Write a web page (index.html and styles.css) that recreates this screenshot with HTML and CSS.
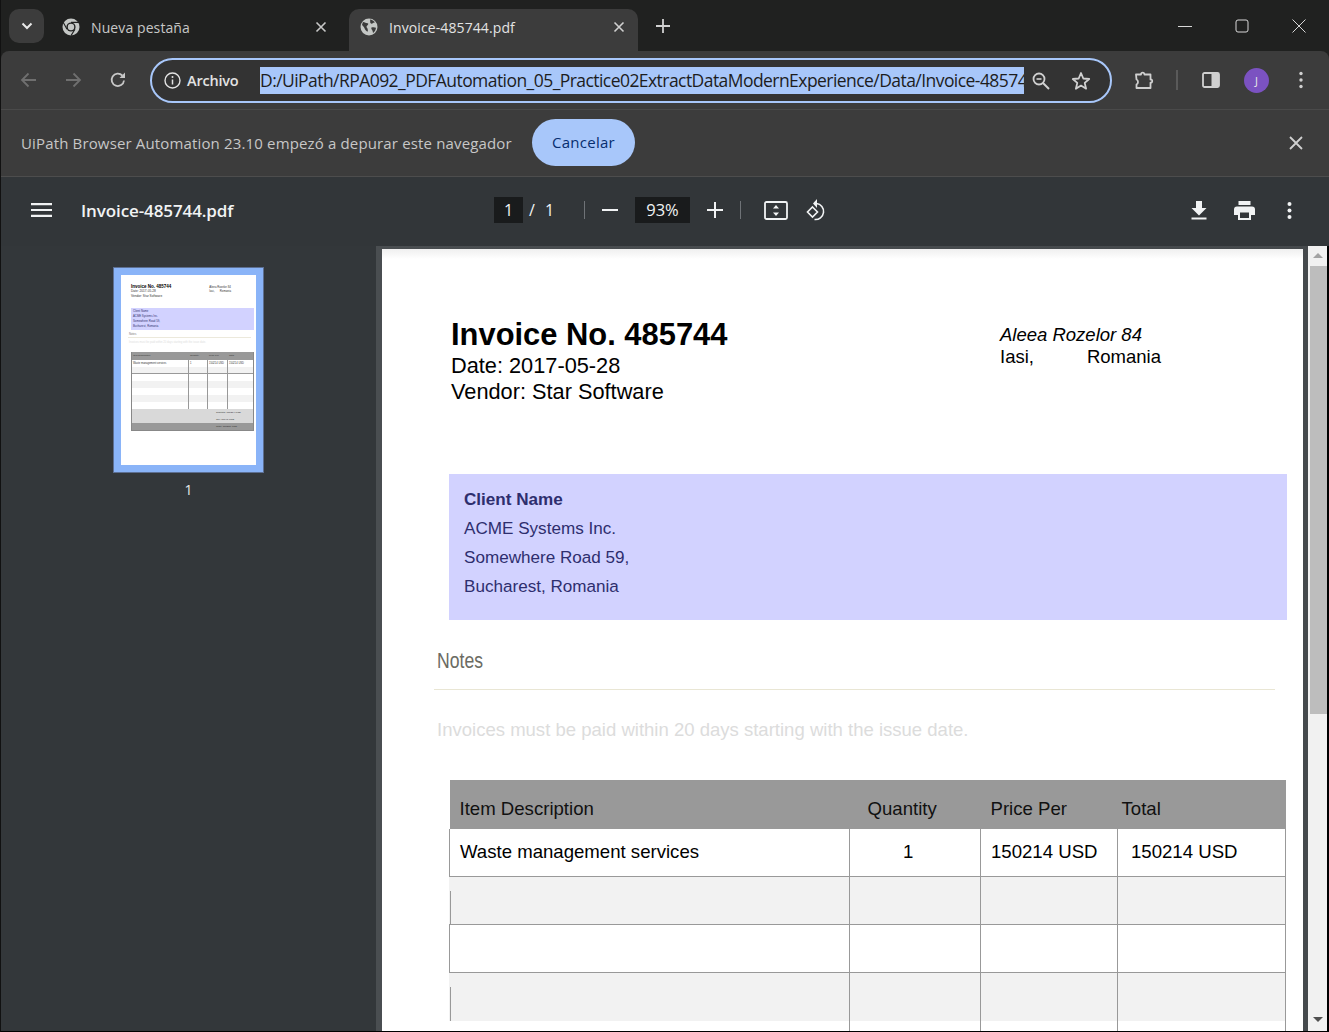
FILE: index.html
```html
<!DOCTYPE html>
<html lang="es">

<head>
    <meta charset="UTF-8">
    <title>Invoice-485744.pdf</title>
    <link rel="stylesheet" href="styles.css">
</head>

<body>
    <div class="window">

        <div class="tabstrip">
            <div class="tab-search">
                <svg width="14" height="14" viewBox="0 0 14 14"><path d="M2.5 4.5 7 9l4.5-4.5" fill="none" stroke="#e8e8e8" stroke-width="2"/></svg>
            </div>
            <div class="tab tab-first">
                <svg class="tab-icon" width="18" height="18" viewBox="0 0 18 18">
                    <circle cx="9" cy="9" r="8.5" fill="#c4c7c5"/>
                    <circle cx="9" cy="9" r="4.6" fill="#202120"/>
                    <circle cx="9" cy="9" r="3.2" fill="#c4c7c5"/>
                    <path d="M9 4.4h8M5 11.3 1.3 4.6M13 11.3 9 17.6" stroke="#202120" stroke-width="1.1" fill="none"/>
                </svg>
                <span class="tab-title">Nueva pestaña</span>
                <svg class="tab-close" width="12" height="12" viewBox="0 0 12 12"><path d="M1.5 1.5l9 9M10.5 1.5l-9 9" stroke="#c8c8c8" stroke-width="1.6"/></svg>
            </div>
            <div class="tab tab-active">
                <svg class="tab-icon" width="18" height="18" viewBox="0 0 18 18">
                    <circle cx="9" cy="9" r="8.5" fill="#c4c7c5"/>
                    <path d="M3 4c2 .3 3.2 1.3 4.6 1.2 1.2 0 .7 1.6-.3 2.2-1 .6-.9 1.7-.1 2.6.7.8.5 2.2.8 3.6-2-.3-3-2.3-3.6-3.7C3.8 8.5 2.5 7.5 2 6.7zM10 1.5c2 .3 3.8 1.4 4.8 2.8-1 .7-1.8.5-2.4 1.2-.6.7-1.6.2-2.1-.7-.3-.7.2-1.6-.3-3.3zM11.5 9.5c1.3-.5 3.3-.4 4.5.2-.2 2.2-1.3 4-3 5.2-.2-1.4-.3-2.2-1-3-.5-.7-1.1-1.9-.5-2.4z" fill="#3c3c3c"/>
                </svg>
                <span class="tab-title">Invoice-485744.pdf</span>
                <svg class="tab-close" width="12" height="12" viewBox="0 0 12 12"><path d="M1.5 1.5l9 9M10.5 1.5l-9 9" stroke="#d0d0d0" stroke-width="1.6"/></svg>
            </div>
            <svg class="new-tab" width="14" height="14" viewBox="0 0 14 14"><path d="M7 0v14M0 7h14" stroke="#d0d0d0" stroke-width="1.8"/></svg>
            <div class="window-controls">
                <svg width="14" height="14" viewBox="0 0 14 14"><path d="M0 7.5h14" stroke="#d8d8d8"/></svg>
                <svg width="14" height="14" viewBox="0 0 14 14"><rect x="1" y="1" width="12" height="12" rx="2" fill="none" stroke="#d8d8d8"/></svg>
                <svg width="14" height="14" viewBox="0 0 14 14"><path d="M.5.5l13 13M13.5.5l-13 13" stroke="#d8d8d8"/></svg>
            </div>
        </div>

        <div class="toolbar">
            <svg class="nav-icon" width="18" height="16" viewBox="0 0 18 16"><path d="M16 8H2.5M8.5 1.5 2 8l6.5 6.5" fill="none" stroke="#6f6f6f" stroke-width="1.8"/></svg>
            <svg class="nav-icon" width="18" height="16" viewBox="0 0 18 16"><path d="M2 8h13.5M9.5 1.5 16 8l-6.5 6.5" fill="none" stroke="#6f6f6f" stroke-width="1.8"/></svg>
            <svg class="nav-icon" width="18" height="18" viewBox="0 0 18 18"><path d="M15 9.5A6.2 6.2 0 1 1 13.3 4.5" fill="none" stroke="#c8c8c8" stroke-width="1.8"/><path d="M16 1.5V7h-5.500z" fill="#c8c8c8"/></svg>
            <div class="omnibox">
                <svg class="info-icon" width="17" height="17" viewBox="0 0 17 17"><circle cx="8.5" cy="8.5" r="7.5" fill="none" stroke="#e3e3e3" stroke-width="1.4"/><path d="M8.5 7.5v5" stroke="#e3e3e3" stroke-width="1.5"/><circle cx="8.5" cy="5" r="1" fill="#e3e3e3"/></svg>
                <span class="scheme">Archivo</span>
                <div class="url"><span>D:/UiPath/RPA092_PDFAutomation_05_Practice02ExtractDataModernExperience/Data/Invoice-485744.pdf</span></div>
                <svg class="zoom-icon" width="20" height="20" viewBox="0 0 20 20"><circle cx="8" cy="8" r="5.5" fill="none" stroke="#d0d0d0" stroke-width="1.8"/><path d="M5.5 8h5" stroke="#d0d0d0" stroke-width="1.6"/><path d="M12 12l6 6" stroke="#d0d0d0" stroke-width="2"/></svg>
                <svg class="star-icon" width="20" height="20" viewBox="0 0 20 20"><path d="M10 2l2.3 5.5 5.900.5-4.500 3.900 1.400 5.800L10 14.600l-5.100 3.100 1.400-5.800L1.800 8l5.900-.5z" fill="none" stroke="#d0d0d0" stroke-width="1.8" stroke-linejoin="round"/></svg>
            </div>
            <svg class="ext-icon" width="22" height="22" viewBox="0 0 22 22"><path d="M3 5.5h5c-.4-2.5 3.800-2.500 3.400 0H17.500v5c2.300-.4 2.300 3.600 0 3.200V19H3.500v-3.500c2-.8 2-4.200 0-5z" fill="none" stroke="#d0d0d0" stroke-width="1.8" stroke-linejoin="round"/></svg>
            <span class="toolbar-sep"></span>
            <svg class="panel-icon" width="18" height="16" viewBox="0 0 18 16"><rect x="1" y="1" width="16" height="14" rx="1.5" fill="none" stroke="#d0d0d0" stroke-width="1.8"/><rect x="9.5" y="1" width="7.5" height="14" fill="#d0d0d0"/></svg>
            <div class="avatar">J</div>
            <svg class="menu-icon" width="4" height="18" viewBox="0 0 4 18"><circle cx="2" cy="2.5" r="1.7" fill="#d0d0d0"/><circle cx="2" cy="9" r="1.7" fill="#d0d0d0"/><circle cx="2" cy="15.5" r="1.7" fill="#d0d0d0"/></svg>
        </div>

        <div class="infobar">
            <span class="infobar-text">UiPath Browser Automation 23.10 empezó a depurar este navegador</span>
            <button class="cancel-btn">Cancelar</button>
            <svg class="infobar-close" width="14" height="14" viewBox="0 0 14 14"><path d="M1 1l12 12M13 1 1 13" stroke="#d0d0d0" stroke-width="1.8"/></svg>
        </div>

        <div class="pdf-toolbar">
            <svg class="pdf-menu" width="21" height="14" viewBox="0 0 21 14"><path d="M0 1.2h21M0 7h21M0 12.800h21" stroke="#f1f3f4" stroke-width="2.2"/></svg>
            <span class="pdf-title">Invoice-485744.pdf</span>
            <span class="page-box">1</span>
            <span class="page-slash">/</span>
            <span class="page-total">1</span>
            <span class="pdf-sep"></span>
            <svg class="zoom-out" width="16" height="16" viewBox="0 0 16 16"><path d="M0 8h16" stroke="#f1f3f4" stroke-width="2"/></svg>
            <span class="zoom-box">93%</span>
            <svg class="zoom-in" width="16" height="16" viewBox="0 0 16 16"><path d="M0 8h16M8 0v16" stroke="#f1f3f4" stroke-width="2"/></svg>
            <span class="pdf-sep pdf-sep-2"></span>
            <svg class="fit-icon" width="24" height="19" viewBox="0 0 24 19"><rect x="1" y="1" width="22" height="17" rx="1.5" fill="none" stroke="#f1f3f4" stroke-width="1.8"/><path d="M12 4l3 3.5H9zM12 15l-3-3.5h6z" fill="#f1f3f4"/></svg>
            <svg class="rotate-icon" width="23" height="22" viewBox="0 0 23 22"><path d="M9 4.5h2.500a8 8 0 1 1-2 16" fill="none" stroke="#f1f3f4" stroke-width="1.6"/><path d="M12 0v9L8 4.500z" fill="#f1f3f4"/><path d="M7.500 8 12.500 13l-5 5-5-5z" fill="none" stroke="#f1f3f4" stroke-width="1.6"/></svg>
            <svg class="download-icon" width="16" height="19" viewBox="0 0 16 19"><path d="M5 0h6v7h4.500L8 14.500.5 7H5z" fill="#f1f3f4"/><path d="M.5 17.500h15" stroke="#f1f3f4" stroke-width="2"/></svg>
            <svg class="print-icon" width="21" height="19" viewBox="0 0 21 19"><path d="M4.500 0h12v4h-12z" fill="#f1f3f4"/><path fill-rule="evenodd" d="M3 5.500h15a3 3 0 0 1 3 3V14h-4v5H4v-5H0V8.500a3 3 0 0 1 3-3zM6 11.500v5.500h9v-5.500z" fill="#f1f3f4"/></svg>
            <svg class="pdf-more" width="5" height="17" viewBox="0 0 5 17"><circle cx="2.5" cy="2" r="2" fill="#f1f3f4"/><circle cx="2.5" cy="8.5" r="2" fill="#f1f3f4"/><circle cx="2.5" cy="15" r="2" fill="#f1f3f4"/></svg>
        </div>

        <div class="pdf-main">
            <aside class="sidebar">
                <div class="thumb">
                    <div class="thumb-page">
                        <div class="thumb-head">
                            <div>
                                <div class="t-title">Invoice No. 485744</div>
                                <div>Date: 2017-05-28</div>
                                <div>Vendor: Star Software</div>
                            </div>
                            <div class="t-addr">
                                <div>Aleea Rozelor 84</div>
                                <div>Iasi, &nbsp; &nbsp; &nbsp; Romania</div>
                            </div>
                        </div>
                        <div class="t-client">
                            <div>Client Name</div>
                            <div>ACME Systems Inc.</div>
                            <div>Somewhere Road 59,</div>
                            <div>Bucharest, Romania</div>
                        </div>
                        <div class="t-notes">Notes</div>
                        <div class="t-rule"></div>
                        <div class="t-note-text">Invoices must be paid within 20 days starting with the issue date.</div>
                        <div class="t-table">
                            <div class="t-row t-head"><span>Item Description</span><span>Quantity</span><span>Price Per</span><span>Total</span></div>
                            <div class="t-row"><span>Waste management services</span><span>1</span><span>150214 USD</span><span>150214 USD</span></div>
                            <div class="t-row t-grey t-line"><span></span><span></span><span></span><span></span></div>
                            <div class="t-row"><span></span><span></span><span></span><span></span></div>
                            <div class="t-row t-grey"><span></span><span></span><span></span><span></span></div>
                            <div class="t-row"><span></span><span></span><span></span><span></span></div>
                            <div class="t-row t-grey"><span></span><span></span><span></span><span></span></div>
                            <div class="t-row"><span></span><span></span><span></span><span></span></div>
                            <div class="t-sum">Subtotal: 150214 USD</div>
                            <div class="t-sum">Tax: 30043 USD</div>
                            <div class="t-sum t-total">Total: 180257 USD</div>
                        </div>
                    </div>
                </div>
                <div class="thumb-num">1</div>
            </aside>

            <div class="viewer">
                <div class="page">
                    <div class="inv-head">
                        <div class="inv-left">
                            <h1>Invoice No. 485744</h1>
                            <div>Date: 2017-05-28</div>
                            <div>Vendor: Star Software</div>
                        </div>
                        <div class="inv-right">
                            <div class="inv-street">Aleea Rozelor 84</div>
                            <div class="inv-city"><span>Iasi,</span><span>Romania</span></div>
                        </div>
                    </div>

                    <div class="client">
                        <div class="client-name">Client Name</div>
                        <div>ACME Systems Inc.</div>
                        <div>Somewhere Road 59,</div>
                        <div>Bucharest, Romania</div>
                    </div>

                    <div class="notes-title">Notes</div>
                    <div class="notes-rule"></div>
                    <div class="notes-text">Invoices must be paid within 20 days starting with the issue date.</div>

                    <table class="items">
                        <colgroup>
                            <col class="col-desc">
                            <col class="col-qty">
                            <col class="col-price">
                            <col class="col-total">
                        </colgroup>
                        <thead>
                            <tr>
                                <th>Item Description</th>
                                <th class="th-qty">Quantity</th>
                                <th>Price Per</th>
                                <th class="th-total">Total</th>
                            </tr>
                        </thead>
                        <tbody>
                            <tr class="first">
                                <td>Waste management services</td>
                                <td class="qty">1</td>
                                <td>150214 USD</td>
                                <td class="amount">150214 USD</td>
                            </tr>
                            <tr class="grey"><td></td><td></td><td></td><td></td></tr>
                            <tr><td></td><td></td><td></td><td></td></tr>
                            <tr class="grey last-grey"><td></td><td></td><td></td><td></td></tr>
                            <tr class="cut"><td></td><td></td><td></td><td></td></tr>
                        </tbody>
                    </table>
                </div>

                <div class="scrollbar">
                    <div class="arrow-up"></div>
                    <div class="scroll-thumb"></div>
                    <div class="arrow-down"></div>
                </div>
            </div>
        </div>

    </div>
</body>

</html>
```

FILE: styles.css
```css
* {
    box-sizing: border-box;
}

html,
body {
    margin: 0;
    padding: 0;
    height: 100%;
    overflow: hidden;
}

body {
    font-family: "Open Sans", "Noto Sans", sans-serif;
    background: #000;
}

.window {
    width: 1329px;
    height: 1032px;
    display: flex;
    flex-direction: column;
    background: #202120;
    border-left: 1px solid #111;
    border-bottom: 1px solid #000;
    overflow: hidden;
}

/* tab strip */
.tabstrip {
    height: 51px;
    flex: none;
    display: flex;
    align-items: flex-end;
    padding-left: 8px;
    background: #202120;
}

.tab-search {
    width: 35px;
    height: 34px;
    margin-bottom: 8px;
    background: #3c3c3c;
    border-radius: 10px;
    display: flex;
    align-items: center;
    justify-content: center;
}

.tab {
    height: 42px;
    display: flex;
    align-items: center;
    border-radius: 10px 10px 0 0;
    padding-bottom: 6px;
}

.tab-first {
    width: 288px;
    margin-right: 17px;
    padding-left: 18px;
    padding-right: 5px;
}

.tab-active {
    width: 289px;
    background: #3c3c3c;
    padding-left: 11px;
    padding-right: 13px;
}

.tab-icon {
    flex: none;
    margin-right: 11px;
}

.tab-title {
    flex: 1;
    font-size: 14px;
    letter-spacing: 0.1px;
    color: #c7c7c7;
    white-space: nowrap;
}

.tab-active .tab-title {
    color: #e3e3e3;
}

.tab-close {
    flex: none;
}

.new-tab {
    margin: 0 0 18px 18px;
}

.window-controls {
    margin-left: auto;
    margin-bottom: 18px;
    padding-right: 23px;
    display: flex;
    gap: 43px;
}

/* address bar row */
.toolbar {
    height: 59px;
    flex: none;
    display: flex;
    align-items: center;
    background: #3c3c3c;
    border-radius: 8px 8px 0 0;
    border-bottom: 1px solid #4a4a4a;
    padding-left: 19px;
}

.nav-icon {
    flex: none;
    margin-right: 26px;
}

.nav-icon+.nav-icon {
    margin-right: 27px;
}

.nav-icon+.nav-icon+.nav-icon {
    margin-right: 23px;
}

.omnibox {
    flex: none;
    width: 962px;
    height: 45px;
    margin-top: 1px;
    display: flex;
    align-items: center;
    border: 2px solid #a8c7fa;
    border-radius: 23px;
    background: #333;
    padding-left: 12px;
}

.info-icon {
    flex: none;
}

.scheme {
    width: 73px;
    margin-left: 6px;
    font-size: 14.5px;
    font-weight: 600;
    letter-spacing: -0.2px;
    color: #e3e3e3;
}

.url {
    flex: none;
    width: 764px;
    height: 27px;
    line-height: 27px;
    overflow: hidden;
    white-space: nowrap;
    background: #a8c7fa;
    color: #1d1d1d;
    font-size: 17.5px;
    letter-spacing: -0.555px;
}

.zoom-icon {
    flex: none;
    margin-left: 7px;
}

.star-icon {
    flex: none;
    margin-left: 20px;
}

.ext-icon {
    flex: none;
    margin-left: 21px;
}

.toolbar-sep {
    width: 2px;
    height: 20px;
    margin-left: 21px;
    background: #5a5a5a;
}

.panel-icon {
    flex: none;
    margin-left: 24px;
}

.avatar {
    flex: none;
    width: 25px;
    height: 25px;
    margin-left: 24px;
    border-radius: 50%;
    background: #7b52c1;
    color: #e8e8e8;
    font-size: 11px;
    line-height: 25px;
    text-align: center;
}

.menu-icon {
    flex: none;
    margin-left: 30px;
}

/* debugging notice */
.infobar {
    height: 67px;
    flex: none;
    display: flex;
    align-items: center;
    background: #3c3c3c;
    border-bottom: 1px solid #4d4d4d;
    padding-left: 20px;
}

.infobar-text {
    width: 511px;
    font-size: 15px;
    letter-spacing: 0.15px;
    white-space: nowrap;
    color: #c7c7c7;
}

.cancel-btn {
    flex: none;
    width: 103px;
    height: 47px;
    margin-bottom: 2px;
    border: none;
    border-radius: 24px;
    background: #a8c7fa;
    color: #062e6f;
    font-family: inherit;
    font-size: 15px;
    font-weight: 500;
    letter-spacing: 0.25px;
    padding: 0;
}

.infobar-close {
    flex: none;
    margin-left: auto;
    margin-right: 26px;
}

/* pdf viewer toolbar */
.pdf-toolbar {
    height: 69px;
    flex: none;
    display: flex;
    align-items: center;
    background: #323639;
    color: #f1f3f4;
    padding: 0 0 3px 30px;
}

.pdf-menu {
    flex: none;
}

.pdf-title {
    width: 413px;
    margin-left: 29px;
    font-size: 17px;
    font-weight: 600;
    letter-spacing: -0.1px;
    white-space: nowrap;
}

.page-box {
    width: 29px;
    height: 26px;
    background: #191b1c;
    font-size: 16px;
    line-height: 26px;
    text-align: center;
}

.page-slash {
    width: 18px;
    font-size: 16px;
    text-align: center;
}

.page-total {
    width: 10px;
    margin-left: 4px;
    font-size: 16px;
}

.pdf-sep {
    width: 1px;
    height: 18px;
    margin-left: 29px;
    background: #6f7377;
}

.zoom-out {
    flex: none;
    margin-left: 17px;
}

.zoom-box {
    width: 55px;
    height: 26px;
    margin-left: 17px;
    background: #191b1c;
    font-size: 16.5px;
    line-height: 26px;
    text-align: center;
}

.zoom-in {
    flex: none;
    margin-left: 17px;
}

.pdf-sep-2 {
    margin-left: 17px;
}

.fit-icon {
    flex: none;
    margin-left: 23px;
}

.rotate-icon {
    flex: none;
    margin-left: 17px;
}

.download-icon {
    flex: none;
    margin-left: 363px;
}

.print-icon {
    flex: none;
    margin-left: 27px;
}

.pdf-more {
    flex: none;
    margin-left: 32px;
}

/* sidebar + document */
.pdf-main {
    flex: 1;
    min-height: 0;
    display: flex;
    background: #000;
}

.sidebar {
    width: 375px;
    flex: none;
    background: #33373a;
    padding: 21px 0 0 112px;
}

.thumb {
    width: 151px;
    height: 206px;
    padding: 7px;
    background: #8ab4f8;
    border: 1px solid #5d6f92;
}

.thumb-page {
    height: 100%;
    background: #fff;
    padding: 10px 2px 0 10px;
    font-family: "Liberation Sans", Arial, sans-serif;
    font-size: 3.2px;
    line-height: 4.4px;
    color: #333;
}

.thumb-head {
    display: flex;
    height: 23px;
}

.t-title {
    font-size: 4.5px;
    font-weight: bold;
    color: #000;
}

.t-addr {
    margin-left: 38px;
    font-size: 2.8px;
}

.t-client {
    height: 22px;
    padding: 1px 2px;
    background: #d2d2ff;
    color: #33336f;
    font-size: 2.8px;
    line-height: 5px;
}

.t-notes {
    margin: 2px 0 0 -2px;
    height: 5px;
    color: #777;
    font-size: 2.8px;
}

.t-rule {
    height: 1px;
    margin: 0 3px 0 -3px;
    background: #ece9dc;
}

.t-note-text {
    height: 11px;
    margin: 3px 0 0 -2px;
    color: #ddd;
    font-size: 2.7px;
}

.t-table {
    border-bottom: 1px solid #888;
    border-left: 1px solid #888;
    border-right: 1px solid #888;
}

.t-row {
    display: grid;
    grid-template-columns: 57px 19px 20px 1fr;
    height: 7px;
    font-size: 2.6px;
    line-height: 7px;
    color: #333;
}

.t-row span {
    padding-left: 1px;
    white-space: nowrap;
    overflow: hidden;
    border-right: 1px solid #999;
}

.t-row span:last-child {
    border-right: none;
}

.t-head {
    height: 8px;
    background: #999;
    font-size: 2.4px;
}

.t-head span {
    border-right: none;
}

.t-grey {
    background: #f2f2f2;
}

.t-line {
    border-bottom: 1px solid #999;
}

.t-sum {
    height: 7px;
    padding-left: 84px;
    background: #d9d9d9;
    font-size: 2.5px;
    line-height: 7px;
}

.t-total {
    background: #999;
}

.thumb-num {
    width: 151px;
    margin-top: 7px;
    text-align: center;
    color: #e8eaed;
    font-size: 14px;
}

.viewer {
    width: 951px;
    flex: none;
    display: flex;
    background: linear-gradient(to right, #4a4e51, #45494c);
    padding: 3px 0 0 6px;
}

.page {
    width: 921px;
    flex: none;
    height: 782px;
    background: linear-gradient(to bottom, #efefef, #fff 10px);
    font-family: "Liberation Sans", Arial, sans-serif;
    padding-top: 68px;
    overflow: hidden;
}

.inv-head {
    display: flex;
    height: 157px;
    padding-left: 69px;
}

.inv-left {
    width: 549px;
    font-size: 21.75px;
    line-height: 26px;
    color: #000;
}

h1 {
    margin: 0;
    font-size: 30.9px;
    line-height: 36px;
    font-weight: bold;
}

.inv-right {
    padding-top: 7px;
    font-size: 18.5px;
    line-height: 22px;
    color: #000;
}

.inv-street {
    font-style: italic;
}

.inv-city {
    display: flex;
    gap: 53px;
}

.client {
    height: 146px;
    margin: 0 16px 0 67px;
    padding: 11px 15px 0;
    background: #d2d2ff;
    color: #2e2e6e;
    font-size: 17.1px;
    line-height: 29px;
}

.client-name {
    font-weight: bold;
}

.notes-title {
    margin: 29px 0 0 55px;
    height: 23px;
    font-size: 22px;
    line-height: 23px;
    color: #6b6b62;
    transform: scaleX(0.8);
    transform-origin: left;
}

.notes-rule {
    height: 1px;
    margin: 17px 28px 0 52px;
    background: #e9e6d4;
}

.notes-text {
    margin: 29px 0 0 55px;
    height: 21px;
    font-size: 18.54px;
    line-height: 21px;
    color: #dcdcdc;
}

.items {
    width: 836px;
    margin: 40px 0 0 67px;
    border-collapse: collapse;
    table-layout: fixed;
    font-size: 18.6px;
    color: #000;
}

.col-desc {
    width: 400px;
}

.col-qty {
    width: 131px;
}

.col-price {
    width: 137px;
}

.col-total {
    width: 168px;
}

.items th {
    height: 49px;
    background: #999;
    padding: 9px 0 0 10px;
    font-weight: normal;
    text-align: left;
    color: #111;
}

.items .th-qty {
    padding-left: 18px;
}

.items .th-total {
    padding-left: 4px;
}

.items td {
    height: 48px;
    padding: 0 0 0 10px;
    border: 1px solid #999;
    border-top: none;
}

.items .first td {
    height: 47px;
}

.items td.qty {
    padding-left: 53px;
}

.items td.amount {
    padding-left: 13px;
}

.items .grey td {
    background: #f2f2f2;
}

/* the left rule starts lower on shaded rows */
.items .grey td:first-child {
    border-left: 1px solid #f2f2f2;
    background: linear-gradient(#999, #999) 0 14px / 1px 100% no-repeat #f2f2f2;
}

.items .last-grey td {
    height: 49px;
    border-bottom: none;
}

.items .cut td:first-child {
    border-left-color: #fff;
}

.items .cut td {
    border-bottom: none;
}

/* scrollbar */
.scrollbar {
    width: 19px;
    margin: -3px 0 0 5px;
    flex: none;
    background: #f1f1f1;
    display: flex;
    flex-direction: column;
    align-items: center;
    padding-top: 7px;
}

.arrow-up {
    width: 0;
    height: 0;
    border-left: 5px solid transparent;
    border-right: 5px solid transparent;
    border-bottom: 5px solid #a3a3a3;
}

.scroll-thumb {
    align-self: flex-end;
    width: 17px;
    height: 448px;
    margin-top: 8px;
    background: #bdbdbd;
}

.arrow-down {
    width: 0;
    height: 0;
    margin-top: 303px;
    border-left: 5px solid transparent;
    border-right: 5px solid transparent;
    border-top: 5px solid #505050;
}
```
